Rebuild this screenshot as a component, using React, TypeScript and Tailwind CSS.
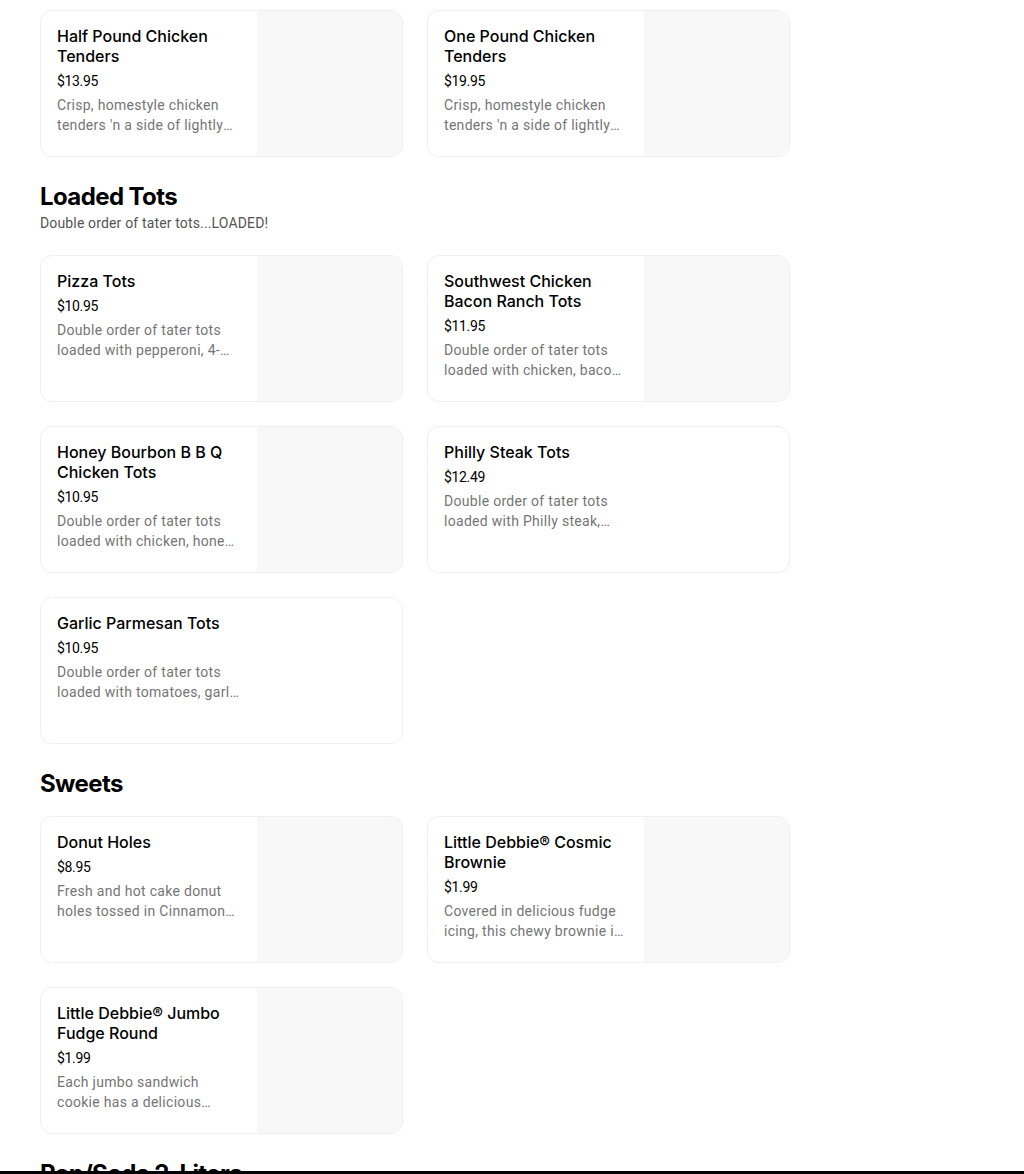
import React from "react"

type Item = {
  name: string
  price: string
  desc: string
  image?: boolean
}

const topItems: Item[] = [
  {
    name: "Half Pound Chicken Tenders",
    price: "$13.95",
    desc: "Crisp, homestyle chicken tenders 'n a side of lightly seasoned fries.",
    image: true,
  },
  {
    name: "One Pound Chicken Tenders",
    price: "$19.95",
    desc: "Crisp, homestyle chicken tenders 'n a side of lightly seasoned fries.",
    image: true,
  },
]

const tots: Item[] = [
  {
    name: "Pizza Tots",
    price: "$10.95",
    desc: "Double order of tater tots loaded with pepperoni, 4-cheese blend and marinara.",
    image: true,
  },
  {
    name: "Southwest Chicken Bacon Ranch Tots",
    price: "$11.95",
    desc: "Double order of tater tots loaded with chicken, bacon, cheese and ranch.",
    image: true,
  },
  {
    name: "Honey Bourbon B B Q Chicken Tots",
    price: "$10.95",
    desc: "Double order of tater tots loaded with chicken, honey bourbon BBQ sauce and cheese.",
    image: true,
  },
  {
    name: "Philly Steak Tots",
    price: "$12.49",
    desc: "Double order of tater tots loaded with Philly steak, peppers, onions and cheese.",
  },
  {
    name: "Garlic Parmesan Tots",
    price: "$10.95",
    desc: "Double order of tater tots loaded with tomatoes, garlic parmesan and cheese.",
  },
]

const sweets: Item[] = [
  {
    name: "Donut Holes",
    price: "$8.95",
    desc: "Fresh and hot cake donut holes tossed in Cinnamon sugar.",
    image: true,
  },
  {
    name: "Little Debbie® Cosmic Brownie",
    price: "$1.99",
    desc: "Covered in delicious fudge icing, this chewy brownie is topped with candy-coated chocolate chips.",
    image: true,
  },
  {
    name: "Little Debbie® Jumbo Fudge Round",
    price: "$1.99",
    desc: "Each jumbo sandwich cookie has a delicious fudge creme filling.",
    image: true,
  },
]

function MenuCard({ item }: { item: Item }) {
  return (
    <div className="flex h-[147px] overflow-hidden rounded-xl border border-[#efefef] bg-white">
      <div className="w-[216px] shrink-0 px-4 pt-[15px]">
        <div className="text-base font-medium leading-5 text-black">{item.name}</div>
        <div className="mt-[5px] font-['Roboto',sans-serif] text-sm leading-5 tracking-tight text-black">
          {item.price}
        </div>
        <div className="mt-1 line-clamp-2 font-['Roboto',sans-serif] text-sm leading-5 tracking-[0.3px] text-[#757575]">
          {item.desc}
        </div>
      </div>
      {item.image && <div className="ml-auto h-[145px] w-[145px] bg-[#f8f8f8]" />}
    </div>
  )
}

function Grid({ items }: { items: Item[] }) {
  return (
    <div className="grid w-[750px] grid-cols-2 gap-6">
      {items.map((item) => (
        <MenuCard key={item.name} item={item} />
      ))}
    </div>
  )
}

export default function App() {
  return (
    <div className="min-h-[1174px] bg-white px-10 pt-[10px] font-['Inter',sans-serif]">
      <Grid items={topItems} />

      {/* Loaded Tots */}
      <h2 className="mt-[24px] text-2xl font-bold leading-8 tracking-tight text-black">Loaded Tots</h2>
      <p className="font-['Roboto',sans-serif] text-sm leading-5 tracking-[0.15px] text-[#545454]">
        Double order of tater tots...LOADED!
      </p>
      <div className="mt-[22px]">
        <Grid items={tots} />
      </div>

      {/* Sweets */}
      <h2 className="mt-[24px] text-2xl font-bold leading-8 tracking-tight text-black">Sweets</h2>
      <div className="mt-[16px]">
        <Grid items={sweets} />
      </div>

      <h2 className="mt-[24px] text-2xl font-bold leading-8 tracking-tight text-black">Pop/Soda 2-Liters</h2>

      <div className="fixed inset-x-0 bottom-0 h-[3px] bg-black" />
    </div>
  )
}
